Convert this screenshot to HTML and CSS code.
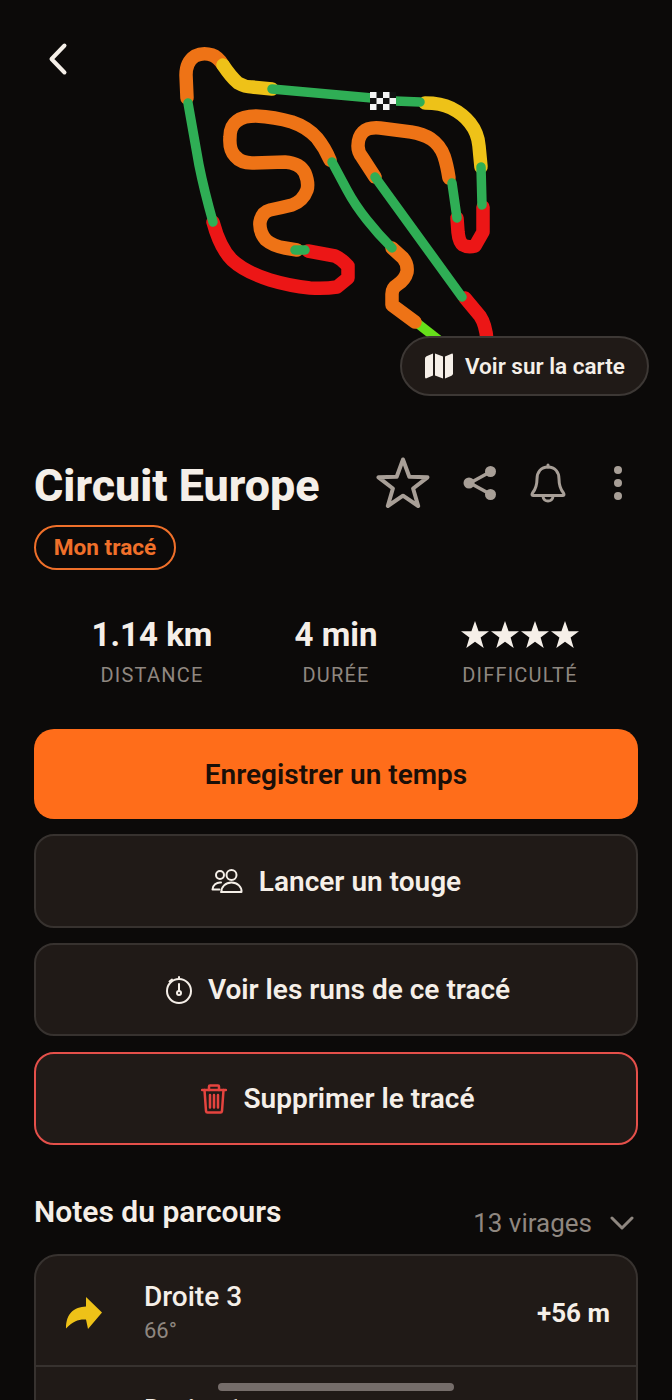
FILE: index.html

```html
<!DOCTYPE html>
<html lang="fr">
<head>
  <meta charset="UTF-8">
  <meta name="viewport" content="width=device-width, initial-scale=1.0">
  <title>Circuit Europe</title>
  <link rel="stylesheet" href="styles.css">
</head>
<body>
  <svg width="0" height="0" class="defs">
    <symbol id="star" viewBox="0 0 30 30">
      <path d="M15 1l3.600 10.200h10.400l-8.400 6.400 3.100 10.400-8.700-6.200-8.700 6.200 3.100-10.400-8.400-6.400h10.400z"/>
    </symbol>
  </svg>

  <div class="screen">
    <div class="hero">
      <svg class="back" width="20" height="34" viewBox="0 0 20 34">
        <path d="M16.500 3.500L3.500 17l13 13.500"/>
      </svg>

      <svg class="track" width="672" height="340" viewBox="0 0 672 340">
        <g class="seg green-light"><path d="M417 323L440 341"/></g>
        <g class="seg orange">
          <path d="M187 98L186 75Q186 62 195 56Q203 52 212 55Q218 57 223 65"/>
          <path d="M449 178Q447 165 444 156Q440 145 431 139Q423 134 411 132L380 128Q368 127 363 132Q358 137 358 146Q358 152 362 157L375 177"/>
          <path d="M415 322L392 305L392 294Q392 288 397 285Q405 280 407 272Q408 264 403 258L392 248"/>
          <path d="M330 160Q325 148 317 138Q307 127 292 122Q275 117 256 116Q243 116 237 121Q230 126 230 137Q229 150 235 156Q241 163 252 163L285 162Q300 163 305 173Q309 183 307 190Q303 201 292 205Q280 208 270 210Q262 212 260 222Q259 232 266 240Q273 246 285 248L297 250"/>
        </g>
        <g class="seg yellow">
          <path d="M223 65Q231 77 238 83Q245 87 252 87L272 89"/>
          <path d="M425 103Q441 103 451 108Q463 114 470 123Q478 133 479 146L481 167"/>
        </g>
        <g class="seg red">
          <path d="M483 207L483 232L475 246Q468 248 463 245Q459 242 458 232L457 218"/>
          <path d="M465 298L480 316Q486 325 487 341"/>
          <path d="M308 251L335 256Q342 259 348 266L348 278L337 287Q325 289 310 288Q290 286 270 280Q245 272 232 260Q220 248 213 222"/>
        </g>
        <g class="seg green">
          <path d="M272 89L372 98"/>
          <path d="M395 101L420 102"/>
          <path d="M481 167L482 205"/>
          <path d="M457 218L452 183"/>
          <path d="M375 177L462 297"/>
          <path d="M392 248Q378 234 367 220Q355 205 347 190L332 162"/>
          <path d="M295 250L305 250"/>
          <path d="M213 222Q204 190 199 165L188 103"/>
        </g>
        <rect x="370" y="92" width="26" height="18" fill="#111"/>
        <g fill="#f4f4f4">
          <rect x="370" y="92" width="6.500" height="6"/>
          <rect x="383" y="92" width="6.500" height="6"/>
          <rect x="376.500" y="98" width="6.500" height="6"/>
          <rect x="389.500" y="98" width="6.500" height="6"/>
          <rect x="370" y="104" width="6.500" height="6"/>
          <rect x="383" y="104" width="6.500" height="6"/>
        </g>
      </svg>

      <div class="map-btn">
        <svg width="28" height="26" viewBox="0 0 28 26" fill="#f5efe8">
          <path d="M0 5.500q0-1.500 1.500-2.200L8 .5v22l-6.500 2.800Q0 25.800 0 24z"/>
          <path d="M10 .5l8 3v22l-8-3z"/>
          <path d="M20 3.500L26.500.7Q28 .2 28 2v18.500q0 1.500-1.500 2.200L20 25.500z"/>
        </svg>
        <span>Voir sur la carte</span>
      </div>
    </div>

    <div class="title-row">
      <h1>Circuit Europe</h1>
      <div class="actions">
        <svg class="ic-star" width="54" height="52" viewBox="0 0 54 52">
          <path d="M27 3.500l6.300 17.200 18.200.6-14.400 11.200 5.100 17.500L27 39.700 11.800 50l5.100-17.500L2.500 21.300l18.200-.6z"/>
        </svg>
        <svg class="ic-share" width="34" height="36" viewBox="0 0 34 36">
          <line x1="27" y1="7" x2="7" y2="18"/>
          <line x1="27" y1="29" x2="7" y2="18"/>
          <circle cx="27.500" cy="6.500" r="5.500"/>
          <circle cx="27.500" cy="29.500" r="5.500"/>
          <circle cx="6" cy="18" r="5.500"/>
        </svg>
        <svg class="ic-bell" width="36" height="40" viewBox="0 0 36 40">
          <path d="M18 4c-7 0-11 5-11 12 0 8-2 11-4.500 14-1 1.500-.5 2.500 1 2.500h29c1.500 0 2-1 1-2.500C31 27 29 24 29 16c0-7-4-12-11-12z"/>
          <path d="M13 33.500c.5 6 9.500 6 10 0"/>
          <path d="M18 4V2"/>
        </svg>
        <div class="dots"><i></i><i></i><i></i></div>
      </div>
    </div>

    <div class="tag">Mon tracé</div>

    <div class="stats">
      <div class="stat">
        <div class="stat-value">1.14 km</div>
        <div class="stat-label">DISTANCE</div>
      </div>
      <div class="stat">
        <div class="stat-value">4 min</div>
        <div class="stat-label">DURÉE</div>
      </div>
      <div class="stat">
        <div class="stat-value stat-stars">
          <svg width="30" height="30"><use href="#star"/></svg>
          <svg width="30" height="30"><use href="#star"/></svg>
          <svg width="30" height="30"><use href="#star"/></svg>
          <svg width="30" height="30"><use href="#star"/></svg>
        </div>
        <div class="stat-label">DIFFICULTÉ</div>
      </div>
    </div>

    <div class="buttons">
      <div class="btn btn-primary">Enregistrer un temps</div>
      <div class="btn btn-tall">
        <svg class="ic-line" width="32" height="24" viewBox="0 0 32 24">
          <circle cx="9" cy="6" r="4"/>
          <circle cx="20.500" cy="6" r="5"/>
          <path d="M10 23h20.500c.5-5-4-9.500-10-9.500s-10.500 4.500-10 9.500z"/>
          <path d="M10 13.500c-4.500-.5-8.500 3-8.500 7h7"/>
        </svg>
        <span>Lancer un touge</span>
      </div>
      <div class="btn">
        <svg class="ic-line" width="26" height="28" viewBox="0 0 26 28">
          <circle cx="13" cy="15" r="12"/>
          <circle cx="13" cy="17" r="2"/>
          <path d="M13 15V8"/>
          <path d="M13 3V1"/>
          <path d="M3.500 5.500L6 3.500"/>
        </svg>
        <span>Voir les runs de ce tracé</span>
      </div>
      <div class="btn btn-danger">
        <svg class="ic-trash" width="26" height="30" viewBox="0 0 26 30">
          <path d="M1 6h24"/>
          <path d="M8 6V2.500q0-1 1-1h8q1 0 1 1V6"/>
          <path d="M3.500 6l1.500 21q.2 1.500 1.500 1.500h13q1.300 0 1.500-1.500L22.500 6"/>
          <path d="M9 11v12.500M13 11v12.500M17 11v12.500"/>
        </svg>
        <span>Supprimer le tracé</span>
      </div>
    </div>

    <div class="notes-head">
      <h2>Notes du parcours</h2>
      <div class="notes-count">
        <span>13 virages</span>
        <svg width="24" height="14" viewBox="0 0 24 14">
          <path d="M2 2l10 10L22 2"/>
        </svg>
      </div>
    </div>

    <div class="notes">
      <div class="note">
        <svg class="note-icon" width="38" height="34" viewBox="0 0 38 34">
          <path d="M21 1l16 15.500L23 33l-2-9.500c-7-.5-13 1.500-20 9 0-15 8-21.500 20-22z"/>
        </svg>
        <div class="note-text">
          <div class="note-name">Droite 3</div>
          <div class="note-angle">66°</div>
        </div>
        <div class="note-dist">+56 m</div>
      </div>
      <div class="note note-next">
        <div class="note-name">Droite 1</div>
      </div>
    </div>

    <div class="home-bar"></div>
  </div>
</body>
</html>
```

FILE: styles.css

```css
* {
  box-sizing: border-box;
}
body {
  margin: 0;
  background-color: #0c0a09;
  color: #f5efe8;
  font-family: Roboto, "Liberation Sans", sans-serif;
}
.defs {
  position: absolute;
}
.screen {
  position: relative;
  width: 672px;
  height: 1400px;
  overflow: hidden;
}

/* track */
.hero {
  position: relative;
  height: 456px;
}
.track {
  display: block;
}
.back {
  position: absolute;
  left: 48px;
  top: 42px;
  fill: none;
  stroke: #f5efe8;
  stroke-width: 4;
  stroke-linecap: round;
  stroke-linejoin: round;
}
.seg path {
  fill: none;
  stroke-width: 13.500;
  stroke-linecap: round;
  stroke-linejoin: round;
}
.orange path { stroke: #ee7316; }
.yellow path { stroke: #eec218; }
.red path { stroke: #ec1616; }
.green path { stroke: #2fae55; stroke-width: 9.500; }
.green-light path { stroke: #66e01a; stroke-width: 9.500; stroke-linecap: butt; }
.map-btn {
  position: absolute;
  left: 400px;
  top: 336px;
  width: 249px;
  height: 60px;
  display: flex;
  align-items: center;
  gap: 12px;
  padding-left: 23px;
  background-color: #201a17;
  border: 2px solid #3d3835;
  border-radius: 30px;
  font-size: 22.500px;
  font-weight: 600;
}

/* title */
.title-row {
  display: flex;
  align-items: center;
  justify-content: space-between;
  height: 58px;
  padding: 0 50px 0 34px;
}
h1 {
  margin: 0;
  font-size: 44.800px;
  font-weight: 800;
}
.actions {
  display: flex;
  align-items: center;
  gap: 33px;
  margin-bottom: 4px;
}
.ic-star {
  margin-bottom: 2px;
  fill: none;
  stroke: #a89f97;
  stroke-width: 4;
  stroke-linejoin: round;
}
.ic-share {
  fill: #a89f97;
  stroke: #a89f97;
  stroke-width: 3.500;
}
.ic-share circle {
  stroke: none;
}
.ic-bell {
  fill: none;
  stroke: #a89f97;
  stroke-width: 3;
  stroke-linecap: round;
  stroke-linejoin: round;
}
.dots {
  display: flex;
  flex-direction: column;
  gap: 5px;
  margin-left: 15px;
}
.dots i {
  display: block;
  width: 8px;
  height: 8px;
  border-radius: 50%;
  background-color: #a89f97;
}
.tag {
  width: 142px;
  height: 45px;
  margin: 11px 0 0 34px;
  border: 2px solid #f0702a;
  border-radius: 23px;
  color: #f0702a;
  font-size: 22.600px;
  font-weight: 700;
  line-height: 41px;
  text-align: center;
}

/* stats */
.stats {
  display: grid;
  grid-template-columns: repeat(3, 184px);
  margin: 46px 0 0 60px;
}
.stat {
  text-align: center;
}
.stat-value {
  height: 38px;
  font-size: 33px;
  font-weight: 700;
  line-height: 38px;
}
.stat-stars {
  display: flex;
  justify-content: center;
}
.stat-stars svg {
  margin-top: 4px;
  fill: #f5efe8;
}
.stat-label {
  margin-top: 9px;
  color: #8f8780;
  font-size: 20px;
  letter-spacing: 1.200px;
  line-height: 24px;
}

/* buttons */
.buttons {
  display: flex;
  flex-direction: column;
  gap: 15px;
  margin: 42px 34px 0;
}
.btn {
  display: flex;
  align-items: center;
  justify-content: center;
  gap: 16px;
  height: 93px;
  padding-left: 4px;
  background-color: #201a17;
  border: 2px solid #37322f;
  border-radius: 20px;
  font-size: 28px;
  font-weight: 600;
}
.btn-tall {
  height: 94px;
  padding-left: 0;
}
.btn-primary {
  height: 90px;
  padding-left: 0;
  background-color: #ff6d1a;
  border: none;
  color: #1a0f08;
}
.btn-danger {
  margin-top: 1px;
  border-color: #e5504a;
}
.ic-line {
  fill: none;
  stroke: #f5efe8;
  stroke-width: 2;
  stroke-linecap: round;
  stroke-linejoin: round;
}
.ic-trash {
  fill: none;
  stroke: #e5443f;
  stroke-width: 2.500;
  stroke-linecap: round;
  stroke-linejoin: round;
}

/* notes */
.notes-head {
  display: flex;
  justify-content: space-between;
  height: 62px;
  margin-top: 47px;
  padding: 0 38px 0 34px;
}
h2 {
  margin: 0;
  font-size: 30px;
  font-weight: 600;
  line-height: 40px;
}
.notes-count {
  display: flex;
  align-items: center;
  gap: 18px;
  height: 40px;
  margin-top: 11px;
  color: #8f8780;
  font-size: 26px;
}
.notes-count svg {
  fill: none;
  stroke: #8f8780;
  stroke-width: 3;
  stroke-linecap: round;
  stroke-linejoin: round;
}
.notes {
  margin: 0 34px;
  background-color: #201a17;
  border: 2px solid #37322f;
  border-radius: 24px;
}
.note {
  display: flex;
  align-items: center;
  height: 111px;
  padding: 4px 26px 0 29px;
  border-bottom: 2px solid #37322f;
}
.note-next {
  align-items: flex-start;
  padding: 26px 0 0 108px;
}
.note-icon {
  fill: #eec218;
}
.note-text {
  flex: 1;
  margin-left: 41px;
}
.note-name {
  font-size: 28px;
  font-weight: 500;
  line-height: 34px;
}
.note-angle {
  margin-top: 3px;
  color: #8f8780;
  font-size: 22px;
  line-height: 28px;
}
.note-dist {
  font-size: 26px;
  font-weight: 700;
}
.home-bar {
  position: absolute;
  left: 218px;
  top: 1383px;
  width: 236px;
  height: 8px;
  border-radius: 4px;
  background-color: #756d6a;
}
```
